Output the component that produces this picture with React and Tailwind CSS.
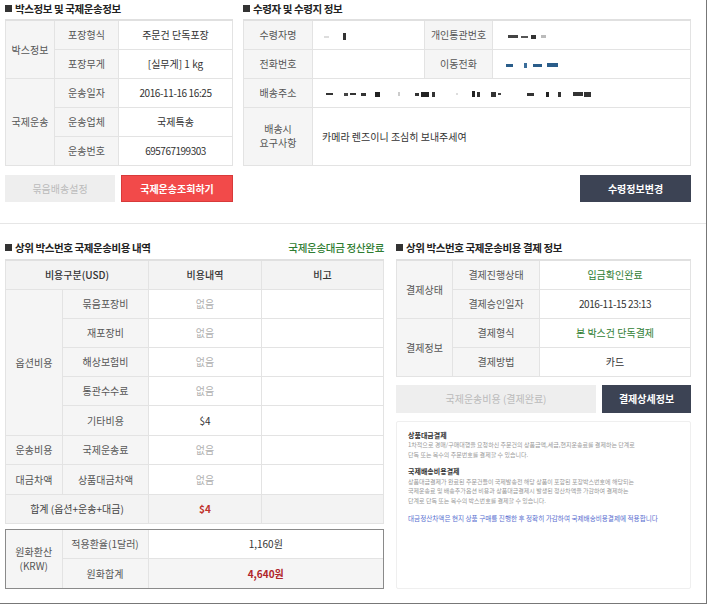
import React from "react";

const td = "border border-[#e3e3e3] text-center";
const lab = "bg-[#f5f5f5] text-[#555]";
const val = "text-[#333]";
const none = "text-[#b0b0b0]";

function Heading({ children, className = "" }) {
  return (
    <div className={`flex items-center gap-[3px] text-[10.5px] font-bold text-[#222] tracking-[-0.4px] ${className}`}>
      <span className="inline-block w-[7px] h-[7px] bg-[#333]" />
      {children}
    </div>
  );
}

// censored values in the screenshot are drawn as small blots
function Mask({ bits }) {
  return (
    <span className="inline-flex items-center align-middle">
      {bits.map(([ml, w, h, c], i) => (
        <span
          key={i}
          className="inline-block"
          style={{ marginLeft: ml, width: w, height: h, background: c }}
        />
      ))}
    </span>
  );
}

const nameMask = [
  [0, 5, 2, "#ddd"],
  [14, 3, 7, "#333"],
];
const idMask = [
  [0, 10, 3, "#444"],
  [3, 7, 2, "#555"],
  [3, 5, 4, "#333"],
  [5, 5, 3, "#bbb"],
];
const phoneMask = [
  [0, 7, 3, "#2a5d8a"],
  [11, 3, 5, "#3a6d9a"],
  [6, 9, 3, "#2a5d8a"],
  [5, 11, 4, "#2a5d8a"],
];
const addrMask = [
  [0, 7, 2, "#333"],
  [11, 4, 3, "#444"],
  [2, 6, 2, "#333"],
  [5, 5, 3, "#333"],
  [9, 5, 5, "#222"],
  [18, 2, 4, "#ccc"],
  [15, 4, 3, "#333"],
  [2, 8, 5, "#222"],
  [3, 3, 5, "#333"],
  [21, 2, 2, "#ddd"],
  [14, 3, 6, "#222"],
  [2, 3, 5, "#333"],
  [11, 5, 5, "#333"],
  [2, 3, 2, "#444"],
  [26, 7, 3, "#333"],
  [12, 3, 5, "#222"],
  [9, 3, 5, "#333"],
  [12, 10, 4, "#333"],
  [1, 7, 5, "#333"],
];

export default function App() {
  return (
    <div className="w-[707px] h-[604px] bg-white border-r border-b border-[#777] font-['Noto_Sans_CJK_KR',sans-serif]">
      {/* top: box / receiver info */}
      <div className="h-[224px] border-b border-[#e6e6e6] flex pl-[5px]">
        <div className="w-[228px]">
          <Heading className="h-[17px] mb-[2px]">박스정보 및 국제운송정보</Heading>
          <table className="w-full table-fixed border-collapse border-t-2 border-t-[#e0e0e0] text-[10px]">
            <colgroup>
              <col className="w-[49px]" />
              <col className="w-[64px]" />
              <col />
            </colgroup>
            <tbody>
              <tr className="h-[29px]">
                <td rowSpan={2} className={`${td} ${lab}`}>박스정보</td>
                <td className={`${td} ${lab}`}>포장형식</td>
                <td className={`${td} ${val}`}>주문건 단독포장</td>
              </tr>
              <tr className="h-[29px]">
                <td className={`${td} ${lab}`}>포장무게</td>
                <td className={`${td} ${val}`}>[실무게] 1 kg</td>
              </tr>
              <tr className="h-[29px]">
                <td rowSpan={3} className={`${td} ${lab}`}>국제운송</td>
                <td className={`${td} ${lab}`}>운송일자</td>
                <td className={`${td} ${val} tracking-[-0.4px]`}>2016-11-16 16:25</td>
              </tr>
              <tr className="h-[29px]">
                <td className={`${td} ${lab}`}>운송업체</td>
                <td className={`${td} ${val}`}>국제특송</td>
              </tr>
              <tr className="h-[29px]">
                <td className={`${td} ${lab}`}>운송번호</td>
                <td className={`${td} ${val} tracking-[-0.5px]`}>695767199303</td>
              </tr>
            </tbody>
          </table>
          <div className="mt-[9px] flex gap-[6px]">
            <button className="w-[110px] h-[27px] bg-[#eeeeee] text-[#bbb] text-[10px]">묶음배송설정</button>
            <button className="flex-1 h-[27px] bg-[#f24a4a] text-white text-[10px] font-bold border border-[#d83a3a]">국제운송조회하기</button>
          </div>
        </div>

        <div className="w-[448px] ml-[10px]">
          <Heading className="h-[17px] mb-[2px]">수령자 및 수령지 정보</Heading>
          <table className="w-full table-fixed border-collapse border-t-2 border-t-[#e0e0e0] text-[10px]">
            <colgroup>
              <col className="w-[69px]" />
              <col className="w-[112px]" />
              <col className="w-[68px]" />
              <col />
            </colgroup>
            <tbody>
              <tr className="h-[29px]">
                <td className={`${td} ${lab}`}>수령자명</td>
                <td className={`${td} text-left pl-[11px]`}><Mask bits={nameMask} /></td>
                <td className={`${td} ${lab}`}>개인통관번호</td>
                <td className={`${td} text-left pl-[15px]`}><Mask bits={idMask} /></td>
              </tr>
              <tr className="h-[29px]">
                <td className={`${td} ${lab}`}>전화번호</td>
                <td className={td}></td>
                <td className={`${td} ${lab}`}>이동전화</td>
                <td className={`${td} text-left pl-[13px]`}><Mask bits={phoneMask} /></td>
              </tr>
              <tr className="h-[29px]">
                <td className={`${td} ${lab}`}>배송주소</td>
                <td colSpan={3} className={`${td} text-left pl-[13px]`}><Mask bits={addrMask} /></td>
              </tr>
              <tr className="h-[58px]">
                <td className={`${td} ${lab} leading-[14px]`}>
                  <div>배송시</div>
                  <div>요구사항</div>
                </td>
                <td colSpan={3} className={`${td} ${val} text-left pl-[9px]`}>카메라 렌즈이니 조심히 보내주세여</td>
              </tr>
            </tbody>
          </table>
          <div className="mt-[9px] flex justify-end">
            <button className="w-[111px] h-[27px] bg-[#3c4354] text-white text-[10px] font-bold">수령정보변경</button>
          </div>
        </div>
      </div>

      {/* bottom: cost details / payment info */}
      <div className="flex pl-[5px] pt-[14px]">
        <div className="w-[379px]">
          <div className="h-[19px] mb-[2px] flex items-center justify-between">
            <Heading>상위 박스번호 국제운송비용 내역</Heading>
            <span className="text-[10.5px] text-[#2f7d32] font-medium tracking-[-0.3px]">국제운송대금 정산완료</span>
          </div>
          <table className="w-full table-fixed border-collapse border-t-2 border-t-[#e0e0e0] text-[10px]">
            <colgroup>
              <col className="w-[57px]" />
              <col className="w-[86px]" />
              <col className="w-[113px]" />
              <col />
            </colgroup>
            <tbody>
              <tr className="h-[29px] bg-[#f3f3f3] text-[#333] font-medium">
                <td colSpan={2} className={td}>비용구분(USD)</td>
                <td className={td}>비용내역</td>
                <td className={td}>비고</td>
              </tr>
              <tr className="h-[29px]">
                <td rowSpan={5} className={`${td} ${lab}`}>옵션비용</td>
                <td className={`${td} ${lab}`}>묶음포장비</td>
                <td className={`${td} ${none}`}>없음</td>
                <td className={td}></td>
              </tr>
              <tr className="h-[29px]">
                <td className={`${td} ${lab}`}>재포장비</td>
                <td className={`${td} ${none}`}>없음</td>
                <td className={td}></td>
              </tr>
              <tr className="h-[29px]">
                <td className={`${td} ${lab}`}>해상보험비</td>
                <td className={`${td} ${none}`}>없음</td>
                <td className={td}></td>
              </tr>
              <tr className="h-[29px]">
                <td className={`${td} ${lab}`}>통관수수료</td>
                <td className={`${td} ${none}`}>없음</td>
                <td className={td}></td>
              </tr>
              <tr className="h-[30px]">
                <td className={`${td} ${lab}`}>기타비용</td>
                <td className={`${td} ${val}`}>$4</td>
                <td className={td}></td>
              </tr>
              <tr className="h-[29px]">
                <td className={`${td} ${lab}`}>운송비용</td>
                <td className={`${td} ${lab}`}>국제운송료</td>
                <td className={`${td} ${none}`}>없음</td>
                <td className={td}></td>
              </tr>
              <tr className="h-[30px]">
                <td className={`${td} ${lab}`}>대금차액</td>
                <td className={`${td} ${lab}`}>상품대금차액</td>
                <td className={`${td} ${none}`}>없음</td>
                <td className={td}></td>
              </tr>
              <tr className="h-[29px] bg-[#f3f3f3]">
                <td colSpan={2} className={`${td} text-[#444]`}>합계 (옵션+운송+대금)</td>
                <td className={`${td} text-[#c0302b] font-bold`}>$4</td>
                <td className={td}></td>
              </tr>
            </tbody>
          </table>
          <div className="mt-[5px] border border-[#8a8a8a]">
            <table className="w-full table-fixed border-collapse text-[10px]">
              <colgroup>
                <col className="w-[56px]" />
                <col className="w-[86px]" />
                <col />
              </colgroup>
              <tbody>
                <tr className="h-[29px]">
                  <td rowSpan={2} className={`border-r border-[#e3e3e3] text-center ${lab} leading-[14px]`}>
                    <div>원화환산</div>
                    <div>(KRW)</div>
                  </td>
                  <td className={`border-r border-b border-[#e3e3e3] text-center ${lab}`}>적용환율(1달러)</td>
                  <td className={`border-b border-[#e3e3e3] text-center ${val}`}>1,160원</td>
                </tr>
                <tr className="h-[29px] bg-[#f5f5f5]">
                  <td className={`border-r border-[#e3e3e3] text-center ${lab}`}>원화합계</td>
                  <td className="text-center text-[#b0252a] font-bold">4,640원</td>
                </tr>
              </tbody>
            </table>
          </div>
        </div>

        <div className="w-[295px] ml-[12px]">
          <Heading className="h-[19px] mb-[2px]">상위 박스번호 국제운송비용 결제 정보</Heading>
          <table className="w-full table-fixed border-collapse border-t-2 border-t-[#e0e0e0] text-[10px]">
            <colgroup>
              <col className="w-[56px]" />
              <col className="w-[87px]" />
              <col />
            </colgroup>
            <tbody>
              <tr className="h-[29px]">
                <td rowSpan={2} className={`${td} ${lab}`}>결제상태</td>
                <td className={`${td} ${lab}`}>결제진행상태</td>
                <td className={`${td} text-[#2f7d32]`}>입금확인완료</td>
              </tr>
              <tr className="h-[29px]">
                <td className={`${td} ${lab}`}>결제승인일자</td>
                <td className={`${td} ${val} tracking-[-0.4px]`}>2016-11-15 23:13</td>
              </tr>
              <tr className="h-[29px]">
                <td rowSpan={2} className={`${td} ${lab}`}>결제정보</td>
                <td className={`${td} ${lab}`}>결제형식</td>
                <td className={`${td} text-[#2f7d32]`}>본 박스건 단독결제</td>
              </tr>
              <tr className="h-[29px]">
                <td className={`${td} ${lab}`}>결제방법</td>
                <td className={`${td} ${val}`}>카드</td>
              </tr>
            </tbody>
          </table>
          <div className="mt-[8px] flex gap-[6px]">
            <button className="w-[200px] h-[28px] bg-[#eeeeee] text-[#bbb] text-[10px]">국제운송비용 (결제완료)</button>
            <button className="flex-1 h-[28px] bg-[#3c4354] text-white text-[10px] font-bold">결제상세정보</button>
          </div>
          <div className="mt-[8px] h-[168px] border border-[#efefef] rounded-[2px] pt-[9px] px-[11px] text-[6px] leading-[9.5px] text-[#999]">
            <p className="font-bold text-[#333] text-[7px]">상품대금결제</p>
            <p>1차적으로 경매/구매대행을 요청하신 주문건의 상품금액,세금,현지운송료를 결제하는 단계로</p>
            <p>단독 또는 복수의 주문번호를 결제할 수 있습니다.</p>
            <p className="mt-[8px] font-bold text-[#333] text-[7px]">국제배송비용결제</p>
            <p>상품대금결제가 완료된 주문건들이 국제발송전 해당 상품이 포함된 포장박스번호에 해당되는</p>
            <p>국제운송료 및 배송추가옵션 비용과 상품대금결제시 발생된 정산차액을 가감하여 결제하는</p>
            <p>단계로 단독 또는 복수의 박스번호를 결제할 수 있습니다.</p>
            <p className="mt-[9px] text-[6.6px] text-[#5a6fd0]">대금정산차액은 현지 상품 구매를 진행한 후 정확히 가감하여 국제배송비용결제에 적용합니다</p>
          </div>
        </div>
      </div>
    </div>
  );
}
